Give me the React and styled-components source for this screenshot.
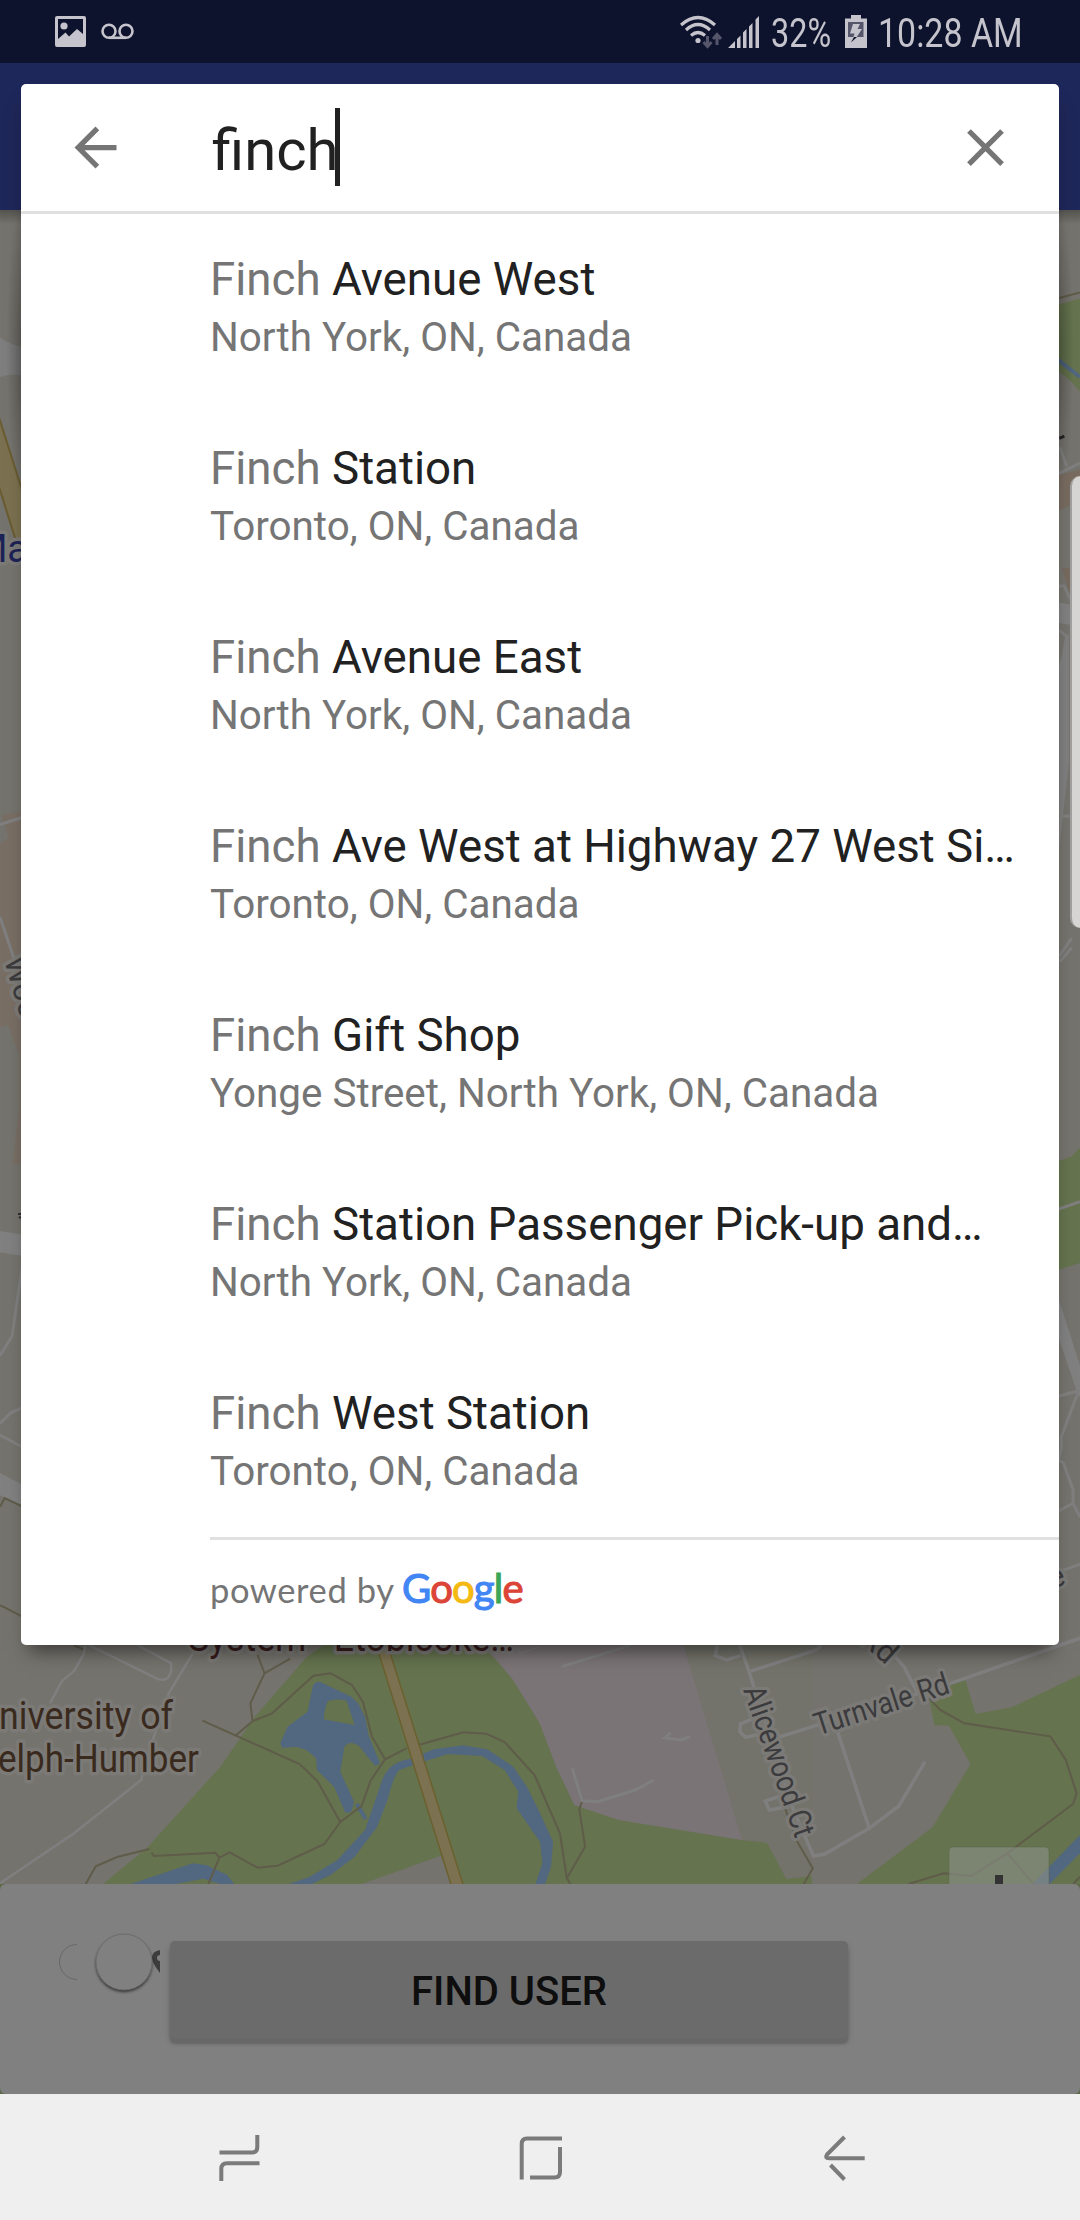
import React from "react";
import styled, { createGlobalStyle } from "styled-components";

const GlobalStyle = createGlobalStyle`
  html, body { margin: 0; padding: 0; }
  body { font-family: Roboto, "Liberation Sans", sans-serif; }
  * { box-sizing: border-box; }
`;

const Screen = styled.div`
  position: relative;
  display: flex;
  flex-direction: column;
  width: 1080px;
  height: 2220px;
  overflow: hidden;
  background: #75736d;
`;

const StatusBar = styled.header`
  display: flex;
  align-items: center;
  height: 63px;
  padding: 0 58px 0 55px;
  background: #0e132d;
  color: #c5c4cc;
`;

const StatusGroup = styled.div`
  display: flex;
  align-items: center;
  margin-left: ${(p) => (p.$end ? "auto" : 0)};
`;

const StatusText = styled.span`
  display: block;
  width: ${(p) => p.$width}px;
  margin-left: ${(p) => p.$gap}px;
  padding-top: 4px;
  font-size: 40px;
  line-height: 60px;
  white-space: nowrap;
  transform: scaleX(${(p) => p.$squeeze});
  transform-origin: left center;
`;

const Icon = styled.svg`
  display: block;
  flex: none;
  margin-left: ${(p) => p.$gap || 0}px;
`;

const AppBar = styled.div`
  height: 147px;
  background: #1e2759;
`;

const MapArea = styled.main`
  height: 1674px;
`;

const MapDrawing = styled.svg`
  display: block;
  font-family: Roboto, sans-serif;
`;

const PanelBacking = styled.div`
  background: #5d6a49;
`;

const BottomPanel = styled.section`
  display: flex;
  align-items: flex-start;
  height: 210px;
  padding: 57px 0 0 56px;
  border-radius: 6px;
  background: #808080;
`;

const SwitchSlot = styled.div`
  display: flex;
  width: 104px;
  margin-right: 10px;
`;

const FindButton = styled.button`
  width: 678px;
  height: 97px;
  padding: 4px 0 0;
  border: 0;
  border-radius: 5px;
  background: #6b6b6b;
  box-shadow: 0 6px 2px #686868, 0 4px 6px rgba(0, 0, 0, 0.22);
  color: #0e0e0e;
  font-family: inherit;
  font-size: 40px;
  font-weight: 500;
  line-height: 93px;
`;

const NavBar = styled.nav`
  display: flex;
  height: 126px;
  background: #efefef;
`;

const Dialog = styled.section`
  position: absolute;
  left: 21px;
  top: 84px;
  width: 1038px;
  height: 1561px;
  display: flex;
  flex-direction: column;
  border-radius: 5px;
  background: #fff;
  box-shadow: 0 14px 18px -8px rgba(0, 0, 0, 0.5);
`;

const SearchRow = styled.div`
  display: flex;
  align-items: center;
  height: 130px;
  padding: 0 42px 0 43px;
  border-bottom: 3px solid #e0e0e0;
`;

const Query = styled.div`
  display: flex;
  flex: 1;
  align-items: center;
  margin-left: 85px;
  color: #212121;
  font-size: 58px;
  line-height: 78px;
`;

const QueryText = styled.span`
  width: 123px;
  padding-top: 4px;
  white-space: nowrap;
`;

const Caret = styled.span`
  width: 5px;
  height: 78px;
  margin-top: -2px;
  background: #212121;
`;

const Results = styled.ul`
  margin: 0;
  padding: 0;
  list-style: none;
`;

const Result = styled.li`
  height: 189px;
  padding: 37px 0 0 189px;
  white-space: nowrap;
`;

const Title = styled.div`
  color: #212121;
  font-size: 45.7px;
  line-height: 58px;
`;

const Matched = styled.span`
  color: #757575;
`;

const Subtitle = styled.div`
  color: #757575;
  font-size: 40.4px;
  line-height: 58px;
`;

const Attribution = styled.footer`
  display: flex;
  align-items: baseline;
  height: 108px;
  margin-left: 189px;
  padding-top: 21px;
  border-top: 3px solid #e0e0e0;
  color: #757575;
  font-family: Lato, sans-serif;
  font-size: 34.5px;
  line-height: 54px;
`;

const Powered = styled.span`
  width: 192px;
  letter-spacing: 0.6px;
  white-space: nowrap;
`;

const Wordmark = styled.span`
  font-size: 40px;
  letter-spacing: -0.8px;
`;

const Letter = styled.span`
  color: ${(p) => p.$color};
  -webkit-text-stroke: 1.1px ${(p) => p.$color};
`;

const EdgeHandle = styled.div`
  position: absolute;
  right: 0;
  top: 476px;
  width: 10px;
  height: 452px;
  border-left: 2px solid #a09f9d;
  border-radius: 12px 0 0 12px;
  background: #d6d5d3;
`;

const results = [
  ["Avenue West", "North York, ON, Canada"],
  ["Station", "Toronto, ON, Canada"],
  ["Avenue East", "North York, ON, Canada"],
  ["Ave West at Highway 27 West Si…", "Toronto, ON, Canada"],
  ["Gift Shop", "Yonge Street, North York, ON, Canada"],
  ["Station Passenger Pick-up and…", "North York, ON, Canada"],
  ["West Station", "Toronto, ON, Canada"],
];

const wordmark = [
  ["G", "#4285f4"],
  ["o", "#db4437"],
  ["o", "#f4b912"],
  ["g", "#4285f4"],
  ["l", "#3aa757"],
  ["e", "#db4437"],
];

function StreetMap() {
  const road = { fill: "none", stroke: "#7f7f7f", vectorEffect: "non-scaling-stroke" };
  const path = { fill: "none", stroke: "#5f5c4a", strokeWidth: 2, vectorEffect: "non-scaling-stroke" };
  const halo = { stroke: "#7b7a77", strokeWidth: 7, strokeLinejoin: "round", paintOrder: "stroke" };
  return (
    <MapDrawing width="1080" height="1674" viewBox="0 210 1080 1674">
      <defs>
        <linearGradient id="barShade" x1="0" y1="0" x2="0" y2="1">
          <stop offset="0" stopColor="#000" stopOpacity=".28" />
          <stop offset="1" stopColor="#000" stopOpacity="0" />
        </linearGradient>
        <radialGradient id="sideShade">
          <stop offset="0" stopColor="#000" stopOpacity=".26" />
          <stop offset="1" stopColor="#000" stopOpacity="0" />
        </radialGradient>
      </defs>
      <rect y="210" width="1080" height="1674" fill="#75736d" />

      {/* western strip */}
      <g transform="translate(0 230) scale(.3333 .44643)">
        <path d="M0 240Q30 256 66 262V326Q30 320 0 330Z" fill="#7e7e7e" />
        <path d="M-5 415L66 582V740L-5 570Z" fill="#7b7150" stroke="#6a5c30" strokeWidth="2" vectorEffect="non-scaling-stroke" />
        <path d="M6 1312L66 1300V1568H0V1375L26 1362Z" fill="#786e64" />
        <path d="M0 1332L66 1316M-4 1525L16 1572" {...road} strokeWidth="3" />
      </g>
      <g transform="translate(0 900) scale(.3333 .4847)">
        <path d="M0 0H66V545H38L57 430V320L24 257L0 262Z" fill="#786e64" />
        <path d="M0 35L66 170M66 760L36 900L0 940M0 1080L32 1058L66 1048M0 1104L66 1128" {...road} strokeWidth="3" />
        <path d="M0 683L66 690V734L0 727ZM0 1182L66 1206V1248L0 1228Z" fill="#808080" />
        <path d="M0 1252L14 1234L66 1251M0 1455L66 1478" {...path} />
      </g>
      <path d="M18 1214h3M19 1218q2-2 3 2" fill="none" stroke="#303032" strokeWidth="2" />

      {/* eastern strip */}
      <g transform="translate(1000 200) scale(.3333 .4847)">
        <path d="M174 216L240 203V395L210 372L174 353Z" fill="#65734e" />
        <path d="M174 330L240 365" fill="none" stroke="#526780" strokeWidth="4" vectorEffect="non-scaling-stroke" />
        <path d="M174 203L240 191" {...path} />
        <path d="M174 568L240 556V620L174 642Z" fill="#776b60" />
        <path d="M186 760L240 757V850L204 800Z" fill="#776b60" />
        <path d="M174 830L240 838V880L174 872Z" fill="#808080" />
        <path d="M178 970L207 890V1160L178 1335Z" fill="#7f7f7f" />
        <path d="M174 565L240 543M180 510L200 550M176 797L192 796L214 828M178 888L200 900L190 940L178 968M188 1271L240 1272M178 1560L215 1523" {...road} strokeWidth="3" />
        <path d="M178 492L193 487" fill="none" stroke="#262628" strokeWidth="3" vectorEffect="non-scaling-stroke" />
      </g>
      <g transform="translate(1000 950) scale(.3333 .4591)">
        <path d="M174 460L215 450L240 430V682L174 697Z" fill="#65734e" />
        <path d="M174 755L240 905V975L232 965L174 840Z" fill="#808080" />
        <path d="M180 25L215 -5M174 565L240 548M174 972L236 960L184 1060V1085L176 1108M174 1110L190 1117L219 1175V1205L176 1222M219 1205L240 1235M174 1355L240 1338M0 1560L240 1498" {...road} strokeWidth="3" />
      </g>

      {/* park, river and neighbourhood south of the dialog */}
      <g transform="translate(0 1620) scale(.34439 .33333)">
        <path d="M300 792L430 680L640 440L740 290L890 112L960 60H1380L1440 120L1490 180L1568 310L1615 440L1668 555L1798 600L2155 660L2228 668L2283 776L2357 768V792H1310L1280 707L1050 792Z" fill="#65734e" />
        <path d="M1380 60L1440 115L1490 180L1535 255L1568 312L1615 440L1668 555L1798 600L2155 660L1980 60Z" fill="#7b7476" />
        <path d="M1980 60L2155 660L2228 668L2283 776L2357 768V60Z" fill="#73736b" />
        <path d="M2698 235L2713 315L2756 318L2818 432L2708 622L2488 792H3136V165L2938 262L2833 282L2803 180L2750 198Z" fill="#65734e" />
        <g fill="#526780">
          <path d="M908 200Q912 184 930 186L1020 230L1040 250L1060 290L1070 345L1103 430L1090 437L1075 420L1045 380Q1018 358 1000 380L988 455L1028 545L1020 575L1003 578L970 500L920 450L918 415L890 390L860 380L820 384L814 370L835 320L893 275Z" />
          <path d="M380 792L560 730L600 736L660 765L680 792H640L590 776L510 792Z" />
          <path d="M840 792L900 770L980 720L1060 630L1110 480Q1130 425 1190 418L1260 388L1345 376L1415 388L1490 440L1530 500L1568 580L1606 665L1600 740L1583 792H1555L1575 730L1568 665L1500 565L1505 515L1465 450L1400 408L1300 402L1200 435L1160 450Q1145 460 1125 540L1095 620L1030 710L960 765L905 792Z" />
          <path d="M2998 792L3136 645V700L3048 792Z" />
        </g>
        <path d="M952 243Q975 235 1006 241L1030 315L940 298Q942 265 952 243Z" fill="#65734e" />
        <path d="M1036 552L1062 597" fill="none" stroke="#526780" strokeWidth="4" vectorEffect="non-scaling-stroke" />
        <path d="M748 105L768 160L843 116M768 160L727 250L733 302M588 302L870 432L922 484L988 606L1050 558L1076 482L1118 418L1180 385M685 346L733 304L790 280L910 167L960 160L1022 195L1054 246L1080 350L1118 418" {...path} />
        <path d="M1215 375L1345 337L1412 341L1466 367L1552 465L1626 640L1646 775L1656 792M988 606L942 672L806 737L748 743L667 697L637 713L605 792M637 713L625 698L447 708L440 698M434 687L340 711L278 739L249 792" {...path} />
        <path d="M215 76L244 89M1690 545L1682 568L1699 680L1646 775M2278 560L2315 665L2360 745L2334 792M2698 235L2730 270L2800 310L3050 349L3095 420L3126 520L3116 552L2925 700L2820 768L2740 760L2638 792M2925 700L3000 790M3116 792L3136 770" {...path} />
        <path d="M248 76L242 105L215 153L180 183L145 250M260 76L460 178Q490 185 497 155V130L400 76M560 100L490 220L440 370L410 480L395 492L215 640L0 790" {...road} strokeWidth="2.5" />
        <path d="M1631 140L1830 76M1662 445L1690 542L1735 545L1845 510L1898 480M1948 338L1930 354L1978 360L2004 350" {...road} strokeWidth="3" />
        <path d="M2148 76L2175 155L2300 560L2362 708L2395 702L2524 625L2610 558L2686 425M2175 155L2370 90L2385 76M2083 76L2077 107L2110 120L2150 107M2250 355L2760 190L3136 55M2432 335L2524 625M2595 105L2625 140L2665 220M2200 290L2150 312L2148 335L2165 352L2215 340M2285 522L2222 543L2234 570L2290 560" {...road} strokeWidth="3.5" />
        <path d="M1085 50H1118L1345 795H1310Z" fill="#7c7252" stroke="#6c602f" strokeWidth="1.5" vectorEffect="non-scaling-stroke" />
        <path d="M1500 76L1508 100L1568 80" {...road} strokeWidth="1" />
      </g>

      <g fill="#3a2a1d" fontSize="38" {...halo}>
        <text x="-1" y="1729" textLength="174" lengthAdjust="spacingAndGlyphs">niversity of</text>
        <text x="-2" y="1772" textLength="201" lengthAdjust="spacingAndGlyphs">elph-Humber</text>
      </g>
      <text x="188" y="1651" fontSize="38" fill="#371c1c" textLength="326" lengthAdjust="spacingAndGlyphs" {...halo}>System - Etobicoke…</text>
      <text x="28" y="562" textAnchor="end" fontSize="38" fill="#1d2256" {...halo}>Ma</text>
      <g fill="#3b3b3d" fontSize="31" {...halo}>
        <text transform="translate(4 960) rotate(74)">Woo</text>
        <text transform="translate(818 1735.500) rotate(-17.8)" textLength="140" lengthAdjust="spacingAndGlyphs">Turnvale Rd</text>
        <text transform="translate(743 1690) rotate(70.6)" textLength="158" lengthAdjust="spacingAndGlyphs">Alicewood Ct</text>
        <text transform="translate(859 1641) rotate(42)">Rd</text>
        <text transform="translate(1067 1584) rotate(-18)" textAnchor="end">ve</text>
      </g>

      <rect x="949" y="1847" width="100" height="60" rx="4" fill="#8b8f88" fillOpacity=".62" stroke="#566044" strokeOpacity=".4" />
      <rect x="995" y="1875" width="8" height="20" fill="#333" />
      <rect y="210" width="1080" height="14" fill="url(#barShade)" />
      <ellipse cx="24" cy="350" rx="18" ry="150" fill="url(#sideShade)" />
      <ellipse cx="1056" cy="350" rx="18" ry="150" fill="url(#sideShade)" />
    </MapDrawing>
  );
}

export default function App() {
  return (
    <Screen>
      <GlobalStyle />
      <StatusBar>
        <StatusGroup>
          <Icon width="31" height="31" viewBox="0 0 31 31" fill="#c5c4cc">
            <path fillRule="evenodd" d="M2 0H29Q31 0 31 2V29Q31 31 29 31H2Q0 31 0 29V2Q0 0 2 0ZM3 3V23L10.500 16.500L14 20.500L22 13L28 18V3Z" />
            <circle cx="9" cy="10" r="3.600" />
          </Icon>
          <Icon $gap={15} width="33" height="17" viewBox="0 0 33 17" fill="none" stroke="#c5c4cc" strokeWidth="2.600">
            <circle cx="8" cy="8.300" r="6.500" />
            <circle cx="25" cy="8.300" r="6.500" />
            <path d="M8 14.800H25" />
          </Icon>
        </StatusGroup>
        <StatusGroup $end>
          <Icon width="42" height="34" viewBox="0 0 42 34" fill="none" stroke="#c5c4cc" strokeWidth="3.200">
            <path d="M1 10Q18-5 35 10M6 15Q18 4 30 15M11 20.500Q18 14.500 25 20.500" />
            <circle cx="18" cy="25.500" r="2.600" fill="#c5c4cc" stroke="none" />
            <path d="M27.500 21V30M23.500 27L27.500 31.500L31.500 27M37 30V20M33 24L37 19.500L41 24" stroke="#55566c" strokeWidth="3" />
          </Icon>
          <Icon $gap={6} width="32" height="33" viewBox="0 0 32 33" fill="#c5c4cc">
            <path d="M0 33L7 26V33ZM9 24L12.500 20.500V33H9ZM15 17.500L18.500 14V33H15ZM21 11.500L24.500 8V33H21ZM27.500 4.500L31 1V33H27.500Z" />
          </Icon>
          <StatusText $gap={11} $width={62} $squeeze={0.81}>32%</StatusText>
          <Icon $gap={12} width="22" height="33" viewBox="0 0 22 33">
            <path d="M6 0H16V3.500H22V33H0V3.500H6Z" fill="#c5c4cc" />
            <path d="M3 7H18.500V22H3Z" fill="#55566c" />
            <path d="M8 9H15L12.500 14H17L11 23L7 27L9.500 18.500H5Z" fill="#c5c4cc" />
            <path d="M9 22H12L6 27.500Z" fill="#0e132d" />
          </Icon>
          <StatusText $gap={11} $width={144} $squeeze={0.848}>10:28 AM</StatusText>
        </StatusGroup>
      </StatusBar>
      <AppBar />
      <MapArea>
        <StreetMap />
      </MapArea>
      <PanelBacking>
        <BottomPanel>
          <SwitchSlot>
            <svg width="104" height="80" viewBox="56 1941 104 80" overflow="visible">
              <defs>
                <filter id="thumbShade" x="-30%" y="-30%" width="160%" height="160%">
                  <feDropShadow dx="0" dy="2" stdDeviation="1.500" floodColor="#000" floodOpacity=".65" />
                </filter>
              </defs>
              <path d="M160 1950Q152 1951 152 1958Q152 1963 160 1973V1961A3 3 0 0 1 160 1955Z" fill="#3c3c3c" />
              <path d="M77 1944.500A17.500 17.500 0 0 0 77 1979.500" fill="none" stroke="#5c5c5c" strokeWidth=".7" />
              <circle cx="124" cy="1962" r="28" fill="#808080" filter="url(#thumbShade)" />
              <circle cx="124" cy="1962" r="28" fill="none" stroke="#6c6c6c" />
            </svg>
          </SwitchSlot>
          <FindButton>FIND USER</FindButton>
        </BottomPanel>
      </PanelBacking>
      <NavBar>
        <svg width="1080" height="126" viewBox="0 2094 1080 126" fill="none" stroke="#7b7b7b" strokeWidth="4">
          <path d="M219.500 2152.500H252Q257.300 2152.500 257.300 2147V2135M221.300 2181V2169Q221.300 2163.300 227 2163.300H259.500" />
          <path d="M521.700 2179.500V2144Q521.700 2138.500 527 2138.500H562M530 2177.500H554.500Q560 2177.500 560 2172V2147" />
          <path d="M844.500 2137L827 2154.500Q824.500 2158.200 829 2158.200H864.700M830.500 2165L844.500 2179.500" />
        </svg>
      </NavBar>

      <Dialog>
        <SearchRow>
          <Icon width="63" height="63" viewBox="0 0 24 24" fill="#757575">
            <path d="M20 11H7.830l5.590-5.590L12 4l-8 8 8 8 1.410-1.410L7.830 13H20v-2z" />
          </Icon>
          <Query>
            <QueryText>finch</QueryText>
            <Caret />
          </Query>
          <Icon width="63" height="63" viewBox="0 0 24 24" fill="#757575">
            <path d="M19 6.410L17.590 5 12 10.590 6.410 5 5 6.410 10.590 12 5 17.590 6.410 19 12 13.410 17.590 19 19 17.590 13.410 12z" />
          </Icon>
        </SearchRow>
        <Results>
          {results.map(([name, place], i) => (
            <Result key={i}>
              <Title><Matched>Finch</Matched> {name}</Title>
              <Subtitle>{place}</Subtitle>
            </Result>
          ))}
        </Results>
        <Attribution>
          <Powered>powered by</Powered>
          <Wordmark>
            {wordmark.map(([ch, color], i) => (
              <Letter key={i} $color={color}>{ch}</Letter>
            ))}
          </Wordmark>
        </Attribution>
      </Dialog>
      <EdgeHandle />
    </Screen>
  );
}
